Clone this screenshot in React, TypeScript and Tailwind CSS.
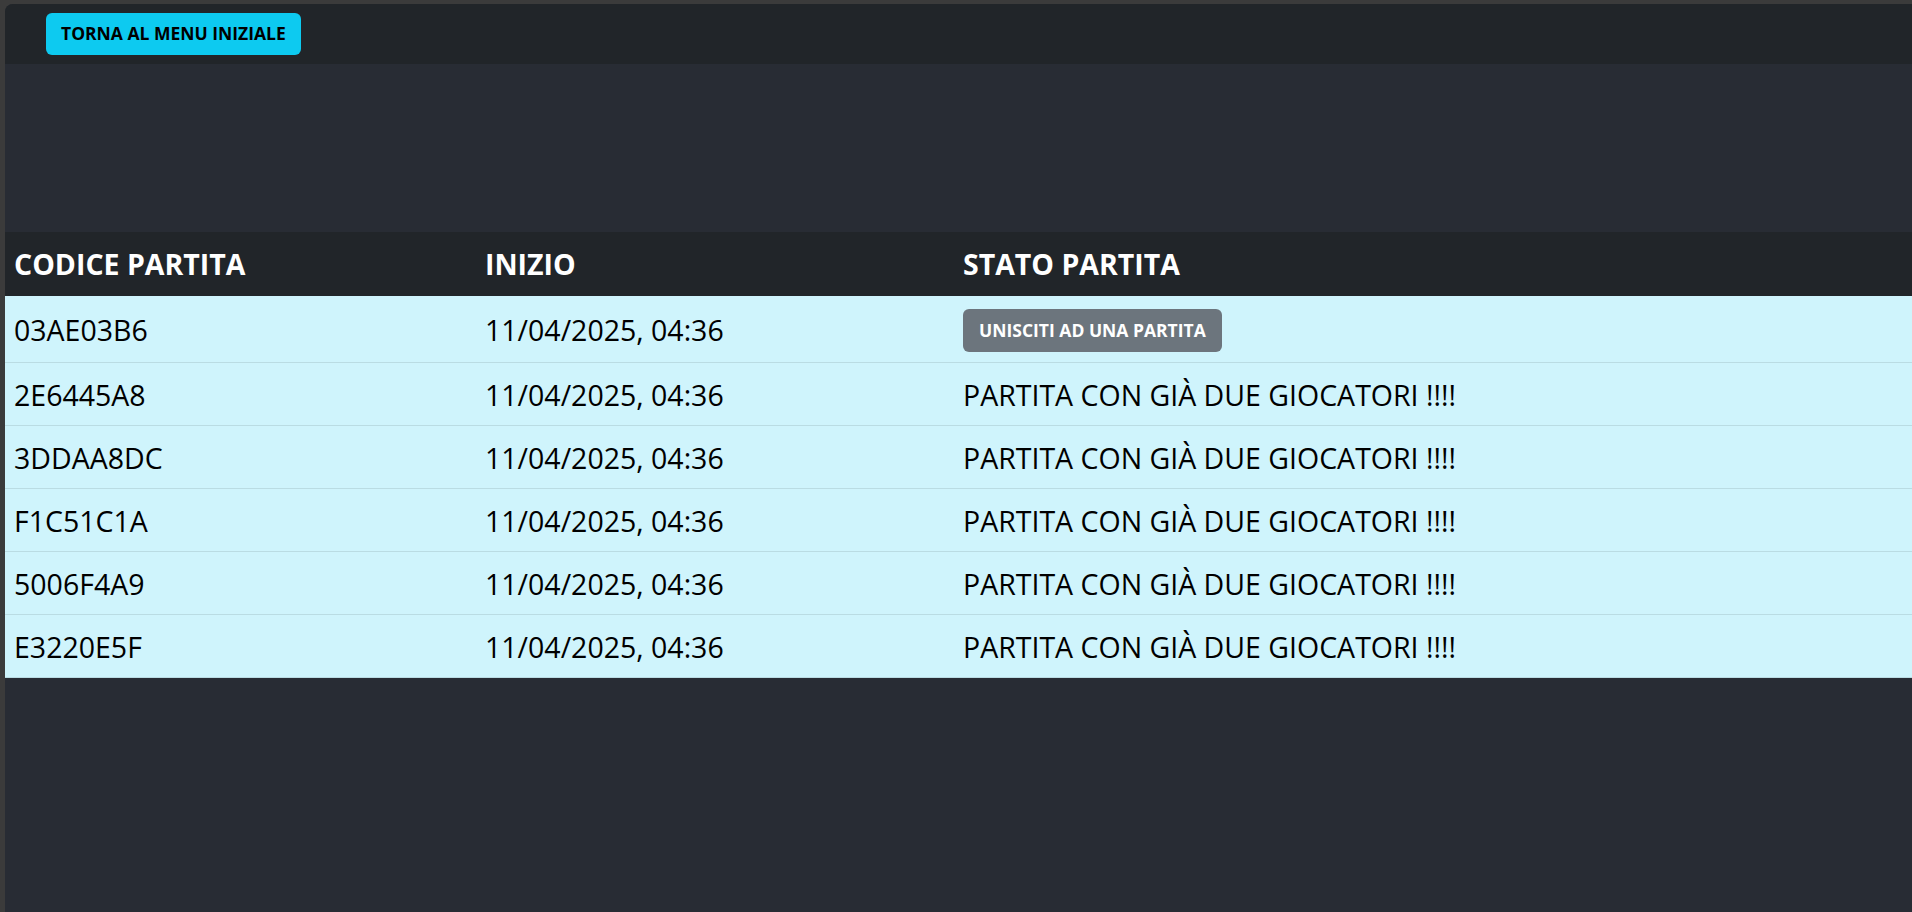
import React from 'react';

interface Partita {
  codice: string;
  inizio: string;
  libera: boolean;
}

const partite: Partita[] = [
  { codice: '03AE03B6', inizio: '11/04/2025, 04:36', libera: true },
  { codice: '2E6445A8', inizio: '11/04/2025, 04:36', libera: false },
  { codice: '3DDAA8DC', inizio: '11/04/2025, 04:36', libera: false },
  { codice: 'F1C51C1A', inizio: '11/04/2025, 04:36', libera: false },
  { codice: '5006F4A9', inizio: '11/04/2025, 04:36', libera: false },
  { codice: 'E3220E5F', inizio: '11/04/2025, 04:36', libera: false },
];

const ListaPartite = () => {
  return (
    <div
      className="min-h-[912px] bg-[#3b3b3b] pt-[4px] pl-[5px]"
      style={{ fontFamily: '"Open Sans", "Noto Sans", sans-serif' }}
    >
      <div className="min-h-[908px] rounded-tl-[8px] bg-[#282c34] overflow-hidden">
        <nav className="h-[60px] bg-[#212529] flex items-center pl-[41px]">
          <button className="h-[42px] px-[15px] rounded-[6px] bg-[#0dcaf0] text-black text-[17.5px] leading-none font-bold">
            TORNA AL MENU INIZIALE
          </button>
        </nav>

        <div className="h-[168px]" />

        <table className="w-full border-collapse text-[28.5px] leading-[40px]">
          <thead>
            <tr className="bg-[#212529] text-white">
              <th className="w-[471px] h-[64px] px-[9px] text-left font-bold">CODICE PARTITA</th>
              <th className="w-[477px] px-[9px] text-left font-bold">INIZIO</th>
              <th className="px-[10px] text-left font-bold">STATO PARTITA</th>
            </tr>
          </thead>
          <tbody>
            {partite.map((p, i) => (
              <tr key={p.codice} className="bg-[#cff4fc] text-black border-b border-[#badce3]">
                <td className={`px-[9px] pt-[2px] ${i === 0 ? 'h-[66px]' : 'h-[63px]'}`}>{p.codice}</td>
                <td className="px-[9px] pt-[2px]">{p.inizio}</td>
                <td className="px-[10px] pt-[2px]">
                  {p.libera ? (
                    <button className="h-[43px] px-[16px] rounded-[6px] bg-[#6c757d] text-white text-[17.5px] leading-none font-bold align-middle">
                      UNISCITI AD UNA PARTITA
                    </button>
                  ) : (
                    'PARTITA CON GIÀ DUE GIOCATORI !!!!'
                  )}
                </td>
              </tr>
            ))}
          </tbody>
        </table>
      </div>
    </div>
  );
};

export default ListaPartite;
